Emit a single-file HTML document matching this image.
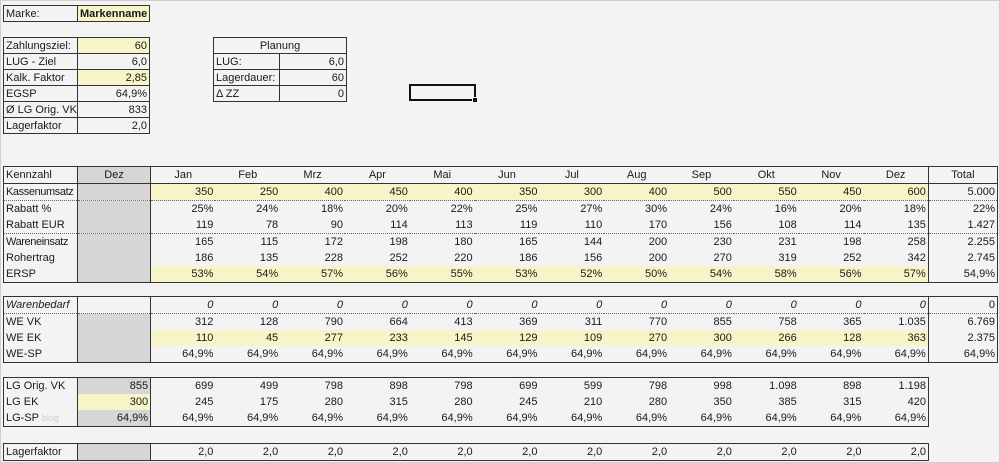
<!DOCTYPE html>
<html><head><meta charset="utf-8"><style>
body{margin:0;width:1000px;height:463px;background:#f3f3f3;font-family:"Liberation Sans",Arial,sans-serif;font-size:11px;color:#1a1a1a;position:relative;overflow:hidden}
.frame{position:absolute;left:0;top:0;width:998px;height:461px;border:1px solid #cfcfcf}
table{position:absolute;border-collapse:collapse;table-layout:fixed;border:1px solid #333}
td{height:16px;line-height:16px;padding:0 2px;white-space:nowrap;overflow:hidden;box-sizing:border-box}
.r{text-align:right}.c{text-align:center}
.y{background:#f7f5c8}.g{background:#d6d6d6}
.bl{border-left:1px solid #333}
.bb td{border-bottom:1px solid #333}
.db td{border-bottom:1px dotted #666}
.i{font-style:italic}
.t1 td{border:1px solid #333;height:16px;line-height:14px}
.sq{letter-spacing:-0.4px}
</style></head><body>
<div class="frame"></div>

<table class="t1" style="left:3px;top:5px;width:146px"><col style="width:74px"><col style="width:72px">
<tr><td>Marke:</td><td class="y" style="font-weight:bold">Markenname</td></tr></table>

<table class="t1" style="left:3px;top:37px;width:146px"><col style="width:74px"><col style="width:72px">
<tr><td>Zahlungsziel:</td><td class="r y">60</td></tr>
<tr><td>LUG - Ziel</td><td class="r">6,0</td></tr>
<tr><td>Kalk. Faktor</td><td class="r y">2,85</td></tr>
<tr><td>EGSP</td><td class="r">64,9%</td></tr>
<tr><td>Ø LG Orig. VK</td><td class="r">833</td></tr>
<tr><td>Lagerfaktor</td><td class="r">2,0</td></tr></table>

<table class="t1" style="left:213px;top:37px;width:133px"><col style="width:66px"><col style="width:67px">
<tr><td colspan="2" class="c">Planung</td></tr>
<tr><td>LUG:</td><td class="r">6,0</td></tr>
<tr><td>Lagerdauer:</td><td class="r">60</td></tr>
<tr><td>Δ ZZ</td><td class="r">0</td></tr></table>

<div style="position:absolute;left:409px;top:84px;width:63px;height:13px;border:2px solid #111"></div>
<div style="position:absolute;left:472px;top:97px;width:4px;height:4px;background:#111;border:1px solid #f3f3f3"></div>

<table style="left:3px;top:166px;width:995px">
<col style="width:74px"><col style="width:73px"><col span="12" style="width:64.8px"><col style="width:69px">
<tr class="bb"><td>Kennzahl</td><td class="c g bl">Dez</td><td class="c bl">Jan</td><td class="c">Feb</td><td class="c">Mrz</td><td class="c">Apr</td><td class="c">Mai</td><td class="c">Jun</td><td class="c">Jul</td><td class="c">Aug</td><td class="c">Sep</td><td class="c">Okt</td><td class="c">Nov</td><td class="c">Dez</td><td class="c bl">Total</td></tr>
<tr class="db"><td class="sq">Kassenumsatz</td><td class="g bl"></td><td class="r y bl">350</td><td class="r y">250</td><td class="r y">400</td><td class="r y">450</td><td class="r y">400</td><td class="r y">350</td><td class="r y">300</td><td class="r y">400</td><td class="r y">500</td><td class="r y">550</td><td class="r y">450</td><td class="r y">600</td><td class="r bl">5.000</td></tr>
<tr><td>Rabatt %</td><td class="g bl"></td><td class="r bl">25%</td><td class="r">24%</td><td class="r">18%</td><td class="r">20%</td><td class="r">22%</td><td class="r">25%</td><td class="r">27%</td><td class="r">30%</td><td class="r">24%</td><td class="r">16%</td><td class="r">20%</td><td class="r">18%</td><td class="r bl">22%</td></tr>
<tr class="db"><td>Rabatt EUR</td><td class="g bl"></td><td class="r bl">119</td><td class="r">78</td><td class="r">90</td><td class="r">114</td><td class="r">113</td><td class="r">119</td><td class="r">110</td><td class="r">170</td><td class="r">156</td><td class="r">108</td><td class="r">114</td><td class="r">135</td><td class="r bl">1.427</td></tr>
<tr><td class="sq">Wareneinsatz</td><td class="g bl"></td><td class="r bl">165</td><td class="r">115</td><td class="r">172</td><td class="r">198</td><td class="r">180</td><td class="r">165</td><td class="r">144</td><td class="r">200</td><td class="r">230</td><td class="r">231</td><td class="r">198</td><td class="r">258</td><td class="r bl">2.255</td></tr>
<tr><td>Rohertrag</td><td class="g bl"></td><td class="r bl">186</td><td class="r">135</td><td class="r">228</td><td class="r">252</td><td class="r">220</td><td class="r">186</td><td class="r">156</td><td class="r">200</td><td class="r">270</td><td class="r">319</td><td class="r">252</td><td class="r">342</td><td class="r bl">2.745</td></tr>
<tr><td>ERSP</td><td class="g bl"></td><td class="r y bl">53%</td><td class="r y">54%</td><td class="r y">57%</td><td class="r y">56%</td><td class="r y">55%</td><td class="r y">53%</td><td class="r y">52%</td><td class="r y">50%</td><td class="r y">54%</td><td class="r y">58%</td><td class="r y">56%</td><td class="r y">57%</td><td class="r bl">54,9%</td></tr>
</table>

<table style="left:3px;top:296px;width:995px">
<col style="width:74px"><col style="width:73px"><col span="12" style="width:64.8px"><col style="width:69px">
<tr class="db"><td class="i">Warenbedarf</td><td class="bl"></td><td class="r i bl">0</td><td class="r i">0</td><td class="r i">0</td><td class="r i">0</td><td class="r i">0</td><td class="r i">0</td><td class="r i">0</td><td class="r i">0</td><td class="r i">0</td><td class="r i">0</td><td class="r i">0</td><td class="r i">0</td><td class="r bl">0</td></tr>
<tr><td>WE VK</td><td class="g bl"></td><td class="r bl">312</td><td class="r">128</td><td class="r">790</td><td class="r">664</td><td class="r">413</td><td class="r">369</td><td class="r">311</td><td class="r">770</td><td class="r">855</td><td class="r">758</td><td class="r">365</td><td class="r">1.035</td><td class="r bl">6.769</td></tr>
<tr><td>WE EK</td><td class="g bl"></td><td class="r y bl">110</td><td class="r y">45</td><td class="r y">277</td><td class="r y">233</td><td class="r y">145</td><td class="r y">129</td><td class="r y">109</td><td class="r y">270</td><td class="r y">300</td><td class="r y">266</td><td class="r y">128</td><td class="r y">363</td><td class="r bl">2.375</td></tr>
<tr><td>WE-SP</td><td class="g bl"></td><td class="r bl">64,9%</td><td class="r">64,9%</td><td class="r">64,9%</td><td class="r">64,9%</td><td class="r">64,9%</td><td class="r">64,9%</td><td class="r">64,9%</td><td class="r">64,9%</td><td class="r">64,9%</td><td class="r">64,9%</td><td class="r">64,9%</td><td class="r">64,9%</td><td class="r bl">64,9%</td></tr>
</table>

<table style="left:3px;top:377px;width:926px">
<col style="width:74px"><col style="width:73px"><col span="12" style="width:64.8px">
<tr><td>LG Orig. VK</td><td class="r g bl">855</td><td class="r bl">699</td><td class="r">499</td><td class="r">798</td><td class="r">898</td><td class="r">798</td><td class="r">699</td><td class="r">599</td><td class="r">798</td><td class="r">998</td><td class="r">1.098</td><td class="r">898</td><td class="r">1.198</td></tr>
<tr><td>LG EK</td><td class="r y bl">300</td><td class="r bl">245</td><td class="r">175</td><td class="r">280</td><td class="r">315</td><td class="r">280</td><td class="r">245</td><td class="r">210</td><td class="r">280</td><td class="r">350</td><td class="r">385</td><td class="r">315</td><td class="r">420</td></tr>
<tr><td>LG-SP <span style="color:#c8d0dc;font-size:9px">blog</span></td><td class="r g bl">64,9%</td><td class="r bl">64,9%</td><td class="r">64,9%</td><td class="r">64,9%</td><td class="r">64,9%</td><td class="r">64,9%</td><td class="r">64,9%</td><td class="r">64,9%</td><td class="r">64,9%</td><td class="r">64,9%</td><td class="r">64,9%</td><td class="r">64,9%</td><td class="r">64,9%</td></tr>
</table>

<table style="left:3px;top:443px;width:926px">
<col style="width:74px"><col style="width:73px"><col span="12" style="width:64.8px">
<tr><td>Lagerfaktor</td><td class="g bl"></td><td class="r bl">2,0</td><td class="r">2,0</td><td class="r">2,0</td><td class="r">2,0</td><td class="r">2,0</td><td class="r">2,0</td><td class="r">2,0</td><td class="r">2,0</td><td class="r">2,0</td><td class="r">2,0</td><td class="r">2,0</td><td class="r">2,0</td></tr>
</table>
</body></html>
